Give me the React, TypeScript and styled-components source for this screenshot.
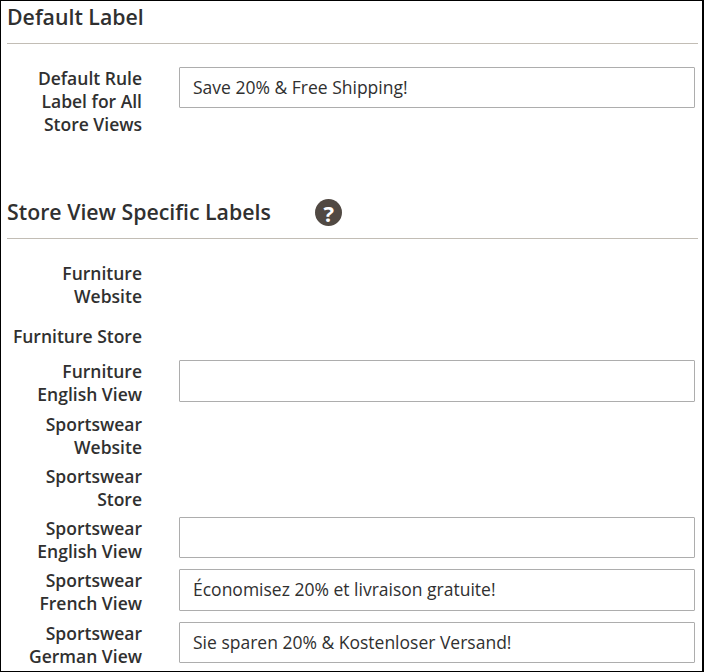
import styled, { createGlobalStyle } from "styled-components";

const GlobalStyle = createGlobalStyle`
  html, body {
    margin: 0;
    background: #fff;
  }
  body {
    font-family: "Open Sans", "Liberation Sans", sans-serif;
    color: #303030;
  }
`;

const Frame = styled.div`
  box-sizing: border-box;
  width: 704px;
  height: 672px;
  overflow: hidden;
  border: 1px solid #000;
  border-right-width: 2px;
  padding: 0 4px 0 6px;
`;

const Section = styled.section<{ $top?: number }>`
  margin-top: ${(p) => p.$top ?? 0}px;
`;

const Heading = styled.div<{ $pad: number }>`
  display: flex;
  align-items: center;
  gap: 44.5px;
  padding: ${(p) => p.$pad}px 0 12px;
  border-bottom: 1px solid #c2bdb5;
`;

const Title = styled.h3`
  margin: 0;
  font-size: 21.3px;
  line-height: 28px;
  font-weight: 600;
  color: #303030;
`;

const HelpIcon = styled.span`
  display: inline-flex;
  align-items: center;
  justify-content: center;
  width: 27px;
  height: 27px;
  margin-top: 1px;
  border-radius: 50%;
  background: #514943;
  color: #fff;
  font-size: 22px;
  font-weight: 700;
  line-height: 1;
`;

const Row = styled.div<{ $top: number }>`
  display: grid;
  grid-template-columns: 135px 516px;
  column-gap: 37px;
  align-items: start;
  margin-top: ${(p) => p.$top}px;
`;

const Label = styled.label`
  font-size: 17.5px;
  line-height: 23px;
  font-weight: 600;
  text-align: right;
  color: #303030;
`;

const Field = styled.input<{ $height: number }>`
  box-sizing: border-box;
  width: 516px;
  height: ${(p) => p.$height}px;
  padding: 0 13px 2px;
  border: 1px solid #adadad;
  border-radius: 1px;
  background: #fff;
  font-family: inherit;
  font-size: 17.5px;
  color: #303030;
  outline: none;
`;

const rows = [
  { top: 23, lines: ["Furniture", "Website"] },
  { top: 17, lines: ["Furniture Store"] },
  { top: 12, lines: ["Furniture", "English View"], field: "", height: 42 },
  { top: 7, lines: ["Sportswear", "Website"] },
  { top: 6, lines: ["Sportswear", "Store"] },
  { top: 6, lines: ["Sportswear", "English View"], field: "", height: 41 },
  { top: 6, lines: ["Sportswear", "French View"], field: "Économisez 20% et livraison gratuite!", height: 42 },
  { top: 7, lines: ["Sportswear", "German View"], field: "Sie sparen 20% & Kostenloser Versand!", height: 41 },
];

export default function App() {
  return (
    <>
      <GlobalStyle />
      <Frame>
        <Section>
          <Heading $pad={2}>
            <Title>Default Label</Title>
          </Heading>
          <Row $top={23}>
            <Label>
              Default Rule
              <br />
              Label for All
              <br />
              Store Views
            </Label>
            <Field $height={41} defaultValue="Save 20% & Free Shipping!" />
          </Row>
        </Section>
        <Section $top={62}>
          <Heading $pad={0}>
            <Title>Store View Specific Labels</Title>
            <HelpIcon>?</HelpIcon>
          </Heading>
          {rows.map((r, i) => (
            <Row key={i} $top={r.top}>
              <Label>
                {r.lines.map((l, j) => (
                  <span key={j}>
                    {j > 0 && <br />}
                    {l}
                  </span>
                ))}
              </Label>
              {r.height && <Field $height={r.height} defaultValue={r.field} />}
            </Row>
          ))}
        </Section>
      </Frame>
    </>
  );
}
